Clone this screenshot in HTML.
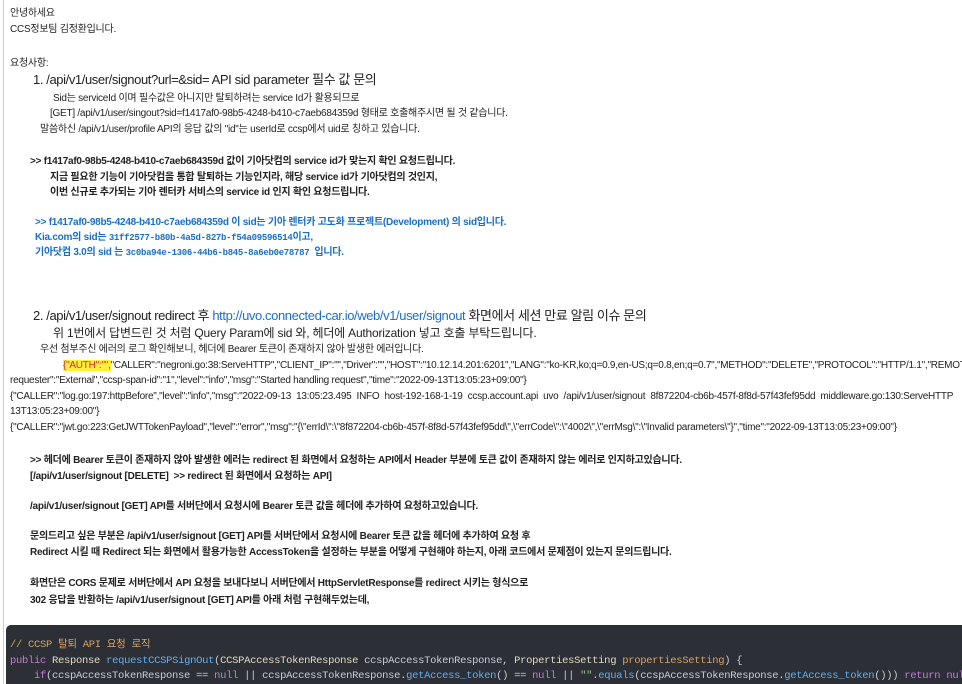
<!DOCTYPE html>
<html><head><meta charset="utf-8"><style>
html,body{margin:0;width:962px;height:684px;overflow:hidden}
body{background:#fff;position:relative;font-family:"Liberation Sans","Noto Sans CJK KR",sans-serif;color:#222}
#wrap{position:absolute;left:0;top:0;width:962px;height:684px;overflow:hidden}
.l{position:absolute;white-space:nowrap;font-size:10px;line-height:14px;letter-spacing:-0.25px}
.b{font-weight:bold}
.blue{color:#1a6fc4}
.big{font-size:13px;line-height:16px;letter-spacing:-0.4px}
.mid{font-size:12px;line-height:15px;letter-spacing:-0.2px}
.m{font-family:"Liberation Mono","Noto Sans CJK KR",monospace;font-size:9px;letter-spacing:-0.3px}
#bar{position:absolute;left:3px;top:0;width:1px;height:684px;background:#ccc}
#code{position:absolute;left:6px;top:625px;width:956px;height:59px;background:#2c2f36;border-radius:5px 0 0 0}
.c{position:absolute;white-space:nowrap;font-family:"Liberation Mono","Noto Sans CJK KR",monospace;font-size:10.5px;line-height:14px;color:#c8ccd4;letter-spacing:-0.3px}
a{color:#1a6fc4;text-decoration:none}
</style></head><body><div id="wrap">
<div id="bar"></div>
<div class="l" style="left:10px;top:7px">안녕하세요</div>
<div class="l" style="left:10px;top:23px">CCS정보팀 김정환입니다.</div>
<div class="l" style="left:10px;top:57px">요청사항:</div>
<div class="l big" style="left:33px;top:72px">1. /api/v1/user/signout?url=&amp;sid= API sid parameter 필수 값 문의</div>
<div class="l" style="left:53px;top:92px">Sid는 serviceId 이며 필수값은 아니지만 탈퇴하려는 service Id가 활용되므로</div>
<div class="l" style="left:50px;top:107px">[GET] /api/v1/user/singout?sid=f1417af0-98b5-4248-b410-c7aeb684359d 형태로 호출해주시면 될 것 같습니다.</div>
<div class="l" style="left:40px;top:123px">말씀하신 /api/v1/user/profile API의 응답 값의 "id"는 userId로 ccsp에서 uid로 칭하고 있습니다.</div>
<div class="l b" style="left:30px;top:155px">&gt;&gt; f1417af0-98b5-4248-b410-c7aeb684359d 값이 기아닷컴의 service id가 맞는지 확인 요청드립니다.</div>
<div class="l b" style="left:50px;top:171px">지금 필요한 기능이 기아닷컴을 통합 탈퇴하는 기능인지라, 해당 service id가 기아닷컴의 것인지,</div>
<div class="l b" style="left:50px;top:186px">이번 신규로 추가되는 기아 렌터카 서비스의 service id 인지 확인 요청드립니다.</div>
<div class="l b blue" style="left:35px;top:216px">&gt;&gt; f1417af0-98b5-4248-b410-c7aeb684359d 이 sid는 기아 렌터카 고도화 프로젝트(Development) 의 sid입니다.</div>
<div class="l b blue" style="left:35px;top:231px">Kia.com의 sid는 <span class="m">31ff2577-b80b-4a5d-827b-f54a09596514</span>이고,</div>
<div class="l b blue" style="left:35px;top:246px">기아닷컴 3.0의 sid 는 <span class="m">3c0ba94e-1306-44b6-b845-8a6eb0e78787</span> &nbsp;입니다.</div>
<div class="l big" style="left:33px;top:308px">2. /api/v1/user/signout redirect 후 <a>http://uvo.connected-car.io/web/v1/user/signout</a> 화면에서 세션 만료 알림 이슈 문의</div>
<div class="l mid" style="left:53px;top:326px">위 1번에서 답변드린 것 처럼 Query Param에 sid 와, 헤더에 Authorization 넣고 호출 부탁드립니다.</div>
<div class="l" style="left:40px;top:343px">우선 첨부주신 에러의 로그 확인해보니, 헤더에 Bearer 토큰이 존재하지 않아 발생한 에러입니다.</div>
<div class="l" style="left:63px;top:359px"><span style="background:#ffef3a;color:#c33">{"AUTH":"",</span>"CALLER":"negroni.go:38:ServeHTTP","CLIENT_IP":"","Driver":"","HOST":"10.12.14.201:6201","LANG":"ko-KR,ko;q=0.9,en-US;q=0.8,en;q=0.7","METHOD":"DELETE","PROTOCOL":"HTTP/1.1","REMOTE_ADDR":"10.1</div>
<div class="l" style="left:10px;top:374px">requester":"External","ccsp-span-id":"1","level":"info","msg":"Started handling request","time":"2022-09-13T13:05:23+09:00"}</div>
<div class="l" style="left:10px;top:390px">{"CALLER":"log.go:197:httpBefore","level":"info","msg":"2022-09-13 &nbsp;13:05:23.495 &nbsp;INFO &nbsp;host-192-168-1-19 &nbsp;ccsp.account.api &nbsp;uvo &nbsp;/api/v1/user/signout &nbsp;8f872204-cb6b-457f-8f8d-57f43fef95dd &nbsp;middleware.go:130:ServeHTTP</div>
<div class="l" style="left:10px;top:405px">13T13:05:23+09:00"}</div>
<div class="l" style="left:10px;top:421px">{"CALLER":"jwt.go:223:GetJWTTokenPayload","level":"error","msg":"{\"errId\":\"8f872204-cb6b-457f-8f8d-57f43fef95dd\",\"errCode\":\"4002\",\"errMsg\":\"Invalid parameters\"}","time":"2022-09-13T13:05:23+09:00"}</div>
<div class="l b" style="left:30px;top:454px">&gt;&gt; 헤더에 Bearer 토큰이 존재하지 않아 발생한 에러는 redirect 된 화면에서 요청하는 API에서 Header 부분에 토큰 값이 존재하지 않는 에러로 인지하고있습니다.</div>
<div class="l b" style="left:30px;top:470px">[/api/v1/user/signout [DELETE] &nbsp;&gt;&gt; redirect 된 화면에서 요청하는 API]</div>
<div class="l b" style="left:30px;top:500px">/api/v1/user/signout [GET] API를 서버단에서 요청시에 Bearer 토큰 값을 헤더에 추가하여 요청하고있습니다.</div>
<div class="l b" style="left:30px;top:530px">문의드리고 싶은 부분은 /api/v1/user/signout [GET] API를 서버단에서 요청시에 Bearer 토큰 값을 헤더에 추가하여 요청 후</div>
<div class="l b" style="left:30px;top:546px">Redirect 시킬 때 Redirect 되는 화면에서 활용가능한 AccessToken을 설정하는 부분을 어떻게 구현해야 하는지, 아래 코드에서 문제점이 있는지 문의드립니다.</div>
<div class="l b" style="left:30px;top:577px">화면단은 CORS 문제로 서버단에서 API 요청을 보내다보니 서버단에서 HttpServletResponse를 redirect 시키는 형식으로</div>
<div class="l b" style="left:30px;top:594px">302 응답을 반환하는 /api/v1/user/signout [GET] API를 아래 처럼 구현해두었는데,</div>
<div id="code"></div>
<div class="c" style="left:10px;top:638px;color:#d8a25e">// CCSP 탈퇴 API 요청 로직</div>
<div class="c" style="left:10px;top:654px"><span style="color:#c678dd">public</span> <span style="color:#e0d8c0">Response</span> <span style="color:#61afef">requestCCSPSignOut</span>(<span style="color:#e0d8c0">CCSPAccessTokenResponse</span> ccspAccessTokenResponse, <span style="color:#e0d8c0">PropertiesSetting</span> <span style="color:#d8a25e">propertiesSetting</span>) {</div>
<div class="c" style="left:10px;top:669px">&nbsp;&nbsp;&nbsp;&nbsp;<span style="color:#c678dd">if</span>(ccspAccessTokenResponse == <span style="color:#c678dd">null</span> || ccspAccessTokenResponse.<span style="color:#61afef">getAccess_token</span>() == <span style="color:#c678dd">null</span> || <span style="color:#98c379">""</span>.<span style="color:#61afef">equals</span>(ccspAccessTokenResponse.<span style="color:#61afef">getAccess_token</span>())) <span style="color:#c678dd">return</span> <span style="color:#c678dd">null</span>;</div>
</div></body></html>
